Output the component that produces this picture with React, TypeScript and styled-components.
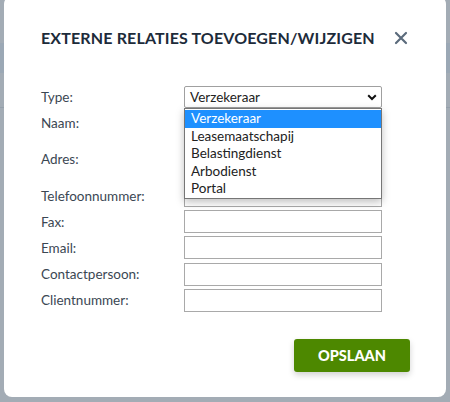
import styled, { createGlobalStyle } from 'styled-components'

const GlobalStyle = createGlobalStyle`
    html, body {
        margin: 0;
        padding: 0;
        width: 450px;
        height: 402px;
        overflow: hidden;
        background: #a3acb5;
        font-family: Lato, "Open Sans", sans-serif;
    }
`

const Page = styled.div`
    position: relative;
    width: 450px;
    height: 402px;
    display: flex;
    flex-direction: column;
`

const PageTop = styled.div`
    height: 43px;
`

const PageBand = styled.div`
    height: 30px;
    background: #9ba8b5;
`

const PageRow = styled.div`
    height: 34px;
    border-bottom: 1px solid #95a0ab;
`

const Modal = styled.div`
    position: absolute;
    left: 4px;
    top: -4px;
    width: 442px;
    height: 401px;
    background: #ffffff;
    border-radius: 8px;
    box-sizing: border-box;
    padding: 28px 36px 0 37px;
    display: flex;
    flex-direction: column;
`

const TitleBar = styled.div`
    display: flex;
    justify-content: space-between;
    align-items: center;
    height: 26px;
`

const Title = styled.h2`
    margin: 0;
    white-space: nowrap;
    font-size: 16px;
    font-weight: 700;
    letter-spacing: 0.15px;
    color: #1d2b3a;
`

const Close = styled.button`
    border: none;
    background: transparent;
    padding: 0;
    margin-right: 2px;
    margin-top: 2px;
    width: 14px;
    height: 14px;
    display: flex;
    cursor: pointer;
`

const Form = styled.div`
    margin-top: 36px;
    display: grid;
    grid-template-columns: 143px 198px;
    row-gap: 3.2px;
    align-items: center;
`

const Label = styled.label`
    font-size: 13.5px;
    color: #3b4753;
`

const Field = styled.div<{ $tall?: boolean }>`
    position: relative;
    height: ${p => (p.$tall ? '43.5px' : '23px')};
    border: 1px solid #a9a9a9;
    box-sizing: border-box;
    background: #fff;
`

const Select = styled.div`
    position: relative;
    height: 22px;
    border: 1px solid #a0a0a0;
    border-radius: 2px;
    box-sizing: border-box;
    display: flex;
    align-items: center;
    justify-content: space-between;
    padding: 0 4px 0 5px;
    font-size: 13.5px;
    color: #222;
    background: #fff;
`

const Options = styled.ul`
    position: absolute;
    left: -1px;
    top: 21px;
    width: 198px;
    margin: 0;
    padding: 1px 0 0;
    list-style: none;
    background: #fff;
    border: 1px solid #767676;
    box-sizing: border-box;
    box-shadow: 0 3px 8px rgba(0, 0, 0, 0.25);
    z-index: 2;
`

const Option = styled.li<{ $active?: boolean }>`
    height: 17.6px;
    line-height: 17.6px;
    padding-left: 6px;
    font-size: 13.5px;
    color: ${p => (p.$active ? '#fff' : '#222')};
    background: ${p => (p.$active ? '#1e90ff' : 'transparent')};
`

const Footer = styled.div`
    display: flex;
    justify-content: flex-end;
    margin-top: 27px;
`

const SaveButton = styled.button`
    width: 116px;
    height: 33px;
    border: none;
    border-radius: 3px;
    background: #4d8800;
    color: #fff;
    font-family: Lato, sans-serif;
    font-size: 14.5px;
    font-weight: 900;
    box-shadow: 0 3px 6px rgba(0, 0, 0, 0.18);
    cursor: pointer;
`

const types = ['Verzekeraar', 'Leasemaatschapij', 'Belastingdienst', 'Arbodienst', 'Portal']

const fields = ['Telefoonnummer:', 'Fax:', 'Email:', 'Contactpersoon:', 'Clientnummer:']

export default function App() {
    return <>
        <GlobalStyle />
        <Page>
            <PageTop />
            <PageBand />
            <PageRow />
            <Modal>
                <TitleBar>
                    <Title>EXTERNE RELATIES TOEVOEGEN/WIJZIGEN</Title>
                    <Close aria-label="Sluiten">
                        <svg width="14" height="14" viewBox="0 0 14 14">
                            <path d="M2 2 L12 12 M12 2 L2 12" stroke="#5b6b7c" strokeWidth="2.2" strokeLinecap="round" />
                        </svg>
                    </Close>
                </TitleBar>
                <Form>
                    <Label>Type:</Label>
                    <Select>
                        <span>Verzekeraar</span>
                        <svg width="10" height="7" viewBox="0 0 10 7">
                            <path d="M1.2 1.2 L5 5 L8.8 1.2" stroke="#111" strokeWidth="2" fill="none" />
                        </svg>
                        <Options>
                            {types.map((t, i) => <Option key={t} $active={i === 0}>{t}</Option>)}
                        </Options>
                    </Select>
                    <Label>Naam:</Label>
                    <Field />
                    <Label>Adres:</Label>
                    <Field $tall />
                    {fields.map(f => <>
                        <Label key={f}>{f}</Label>
                        <Field key={f + 'i'} />
                    </>)}
                </Form>
                <Footer>
                    <SaveButton>OPSLAAN</SaveButton>
                </Footer>
            </Modal>
        </Page>
    </>
}
